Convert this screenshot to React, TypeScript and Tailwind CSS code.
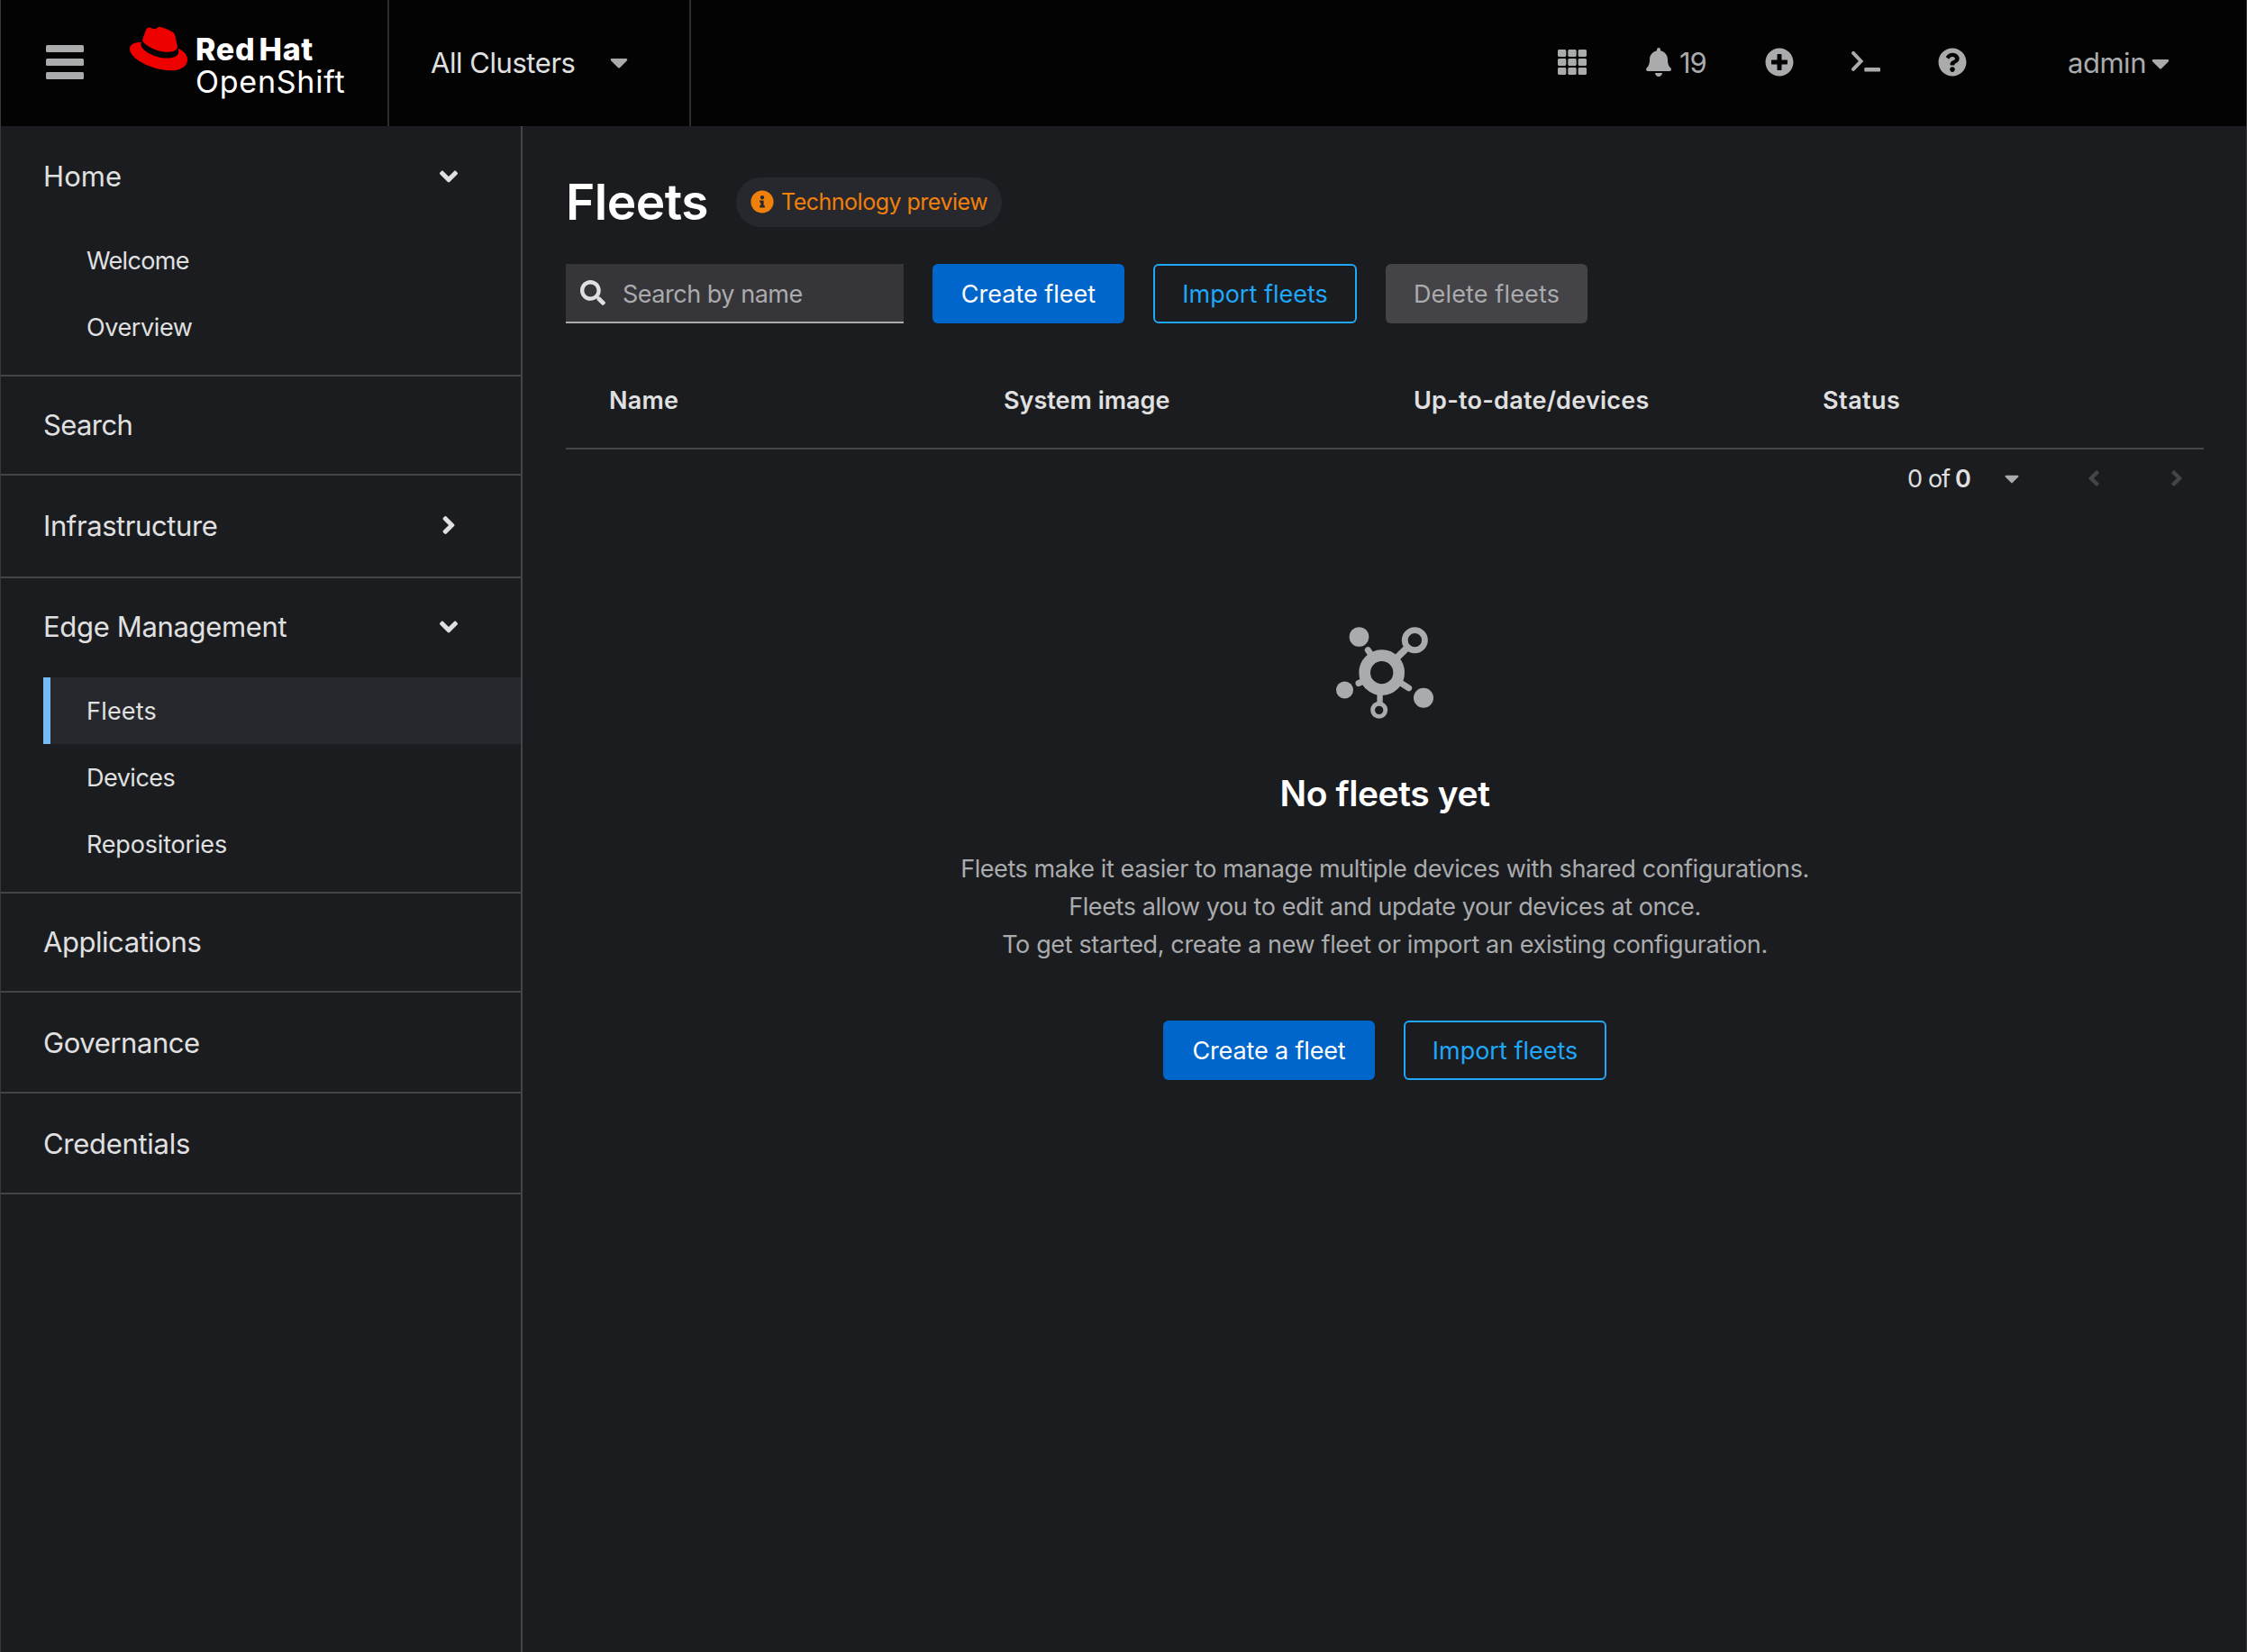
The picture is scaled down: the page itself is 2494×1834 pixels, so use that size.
import type { ReactNode } from 'react';
import {
  FaAngleLeft,
  FaAngleRight,
  FaBell,
  FaCaretDown,
  FaInfoCircle,
  FaPlusCircle,
  FaQuestionCircle,
  FaRedhat,
  FaSearch,
  FaTh,
} from 'react-icons/fa';

function MenuIcon() {
  return (
    <svg viewBox="0 0 42 38" className="-mt-0.5 h-[38px] w-[42px] fill-[#aaabac]">
      <rect x="0" y="0" width="42" height="8" rx="1.5" />
      <rect x="0" y="15" width="42" height="8" rx="1.5" />
      <rect x="0" y="30" width="42" height="8" rx="1.5" />
    </svg>
  );
}

function TerminalIcon() {
  return (
    <svg viewBox="0 0 34 32" className="-mt-0.5 h-8 w-[34px]">
      <path
        d="M3 5.900 L11.600 14.900 L3 23.900"
        fill="none"
        stroke="#aaabac"
        strokeWidth="4"
        strokeLinecap="round"
        strokeLinejoin="miter"
      />
      <rect x="15.3" y="22" width="17.7" height="4.6" rx="1.2" fill="#aaabac" />
    </svg>
  );
}

function ClusterIcon() {
  return (
    <svg viewBox="96 75 330 312" className="h-[104px] w-[110px]" fill="none" stroke="#aaabac">
      <circle cx="251" cy="230" r="57" strokeWidth="38" />
      <circle cx="361" cy="122" r="33.2" strokeWidth="20.5" />
      <circle cx="242" cy="355" r="21.3" strokeWidth="14.5" />
      <g fill="#aaabac" stroke="none">
        <circle cx="175.5" cy="111" r="32.5" />
        <circle cx="127.5" cy="288" r="28.5" />
        <circle cx="390" cy="314" r="33" />
      </g>
      <g strokeWidth="21" strokeLinecap="round">
        <path d="M205 155 L222 180" />
        <path d="M174 265.500 L200 254" />
        <path d="M341 281.500 L304 258" />
      </g>
      <path d="M302 180 L338 145" strokeWidth="23" />
      <path d="M245 296 L244.500 336" strokeWidth="19" />
    </svg>
  );
}

type Item = { label: string; track: string; active?: boolean };

function SubNav({ items }: { items: Item[] }) {
  return (
    <ul className="pb-4 pl-[47px]">
      {items.map((item) => (
        <li
          key={item.label}
          className={
            item.active
              ? 'flex h-[74px] items-center border-l-8 border-[#73bcf7] bg-[#27282d] pt-0.5 pl-10 text-[27px]'
              : 'flex h-[74px] items-center pt-0.5 pl-12 text-[27px]'
          }
        >
          <span className={item.track}>{item.label}</span>
        </li>
      ))}
    </ul>
  );
}

function NavRow({
  label,
  track,
  height,
  chevron,
}: {
  label: string;
  track: string;
  height: string;
  chevron?: 'open' | 'closed';
}) {
  return (
    <div className={`flex items-center justify-between pr-[72px] pl-[47px] text-[31px] ${height}`}>
      <span className={track}>{label}</span>
      {chevron === 'open' && <FaAngleRight className="-mt-px h-8 w-4 rotate-90" />}
      {chevron === 'closed' && <FaAngleRight className="-mt-0.5 h-8 w-4" />}
    </div>
  );
}

function NavGroup({ children }: { children: ReactNode }) {
  return <li className="border-b-2 border-[#444548]">{children}</li>;
}

function Button({
  kind,
  width,
  children,
}: {
  kind: 'primary' | 'secondary' | 'disabled';
  width: string;
  children: ReactNode;
}) {
  const look = {
    primary: 'bg-[#0066cc] text-white',
    secondary: 'border-2 border-[#1fa7f8] text-[#1fa7f8]',
    disabled: 'bg-[#444348] text-[#aaabac]',
  }[kind];
  return (
    <button
      className={`flex h-[66px] items-center justify-center rounded-[6px] pt-0.5 text-[27px] whitespace-nowrap ${width} ${look}`}
    >
      {children}
    </button>
  );
}

function Masthead() {
  return (
    <header className="flex h-[140px] shrink-0 bg-[#030303] text-[31px] text-[#aaabac]">
      <div className="flex w-[431px] items-center border-r-2 border-[#2d2d31] pl-[50px]">
        <MenuIcon />
        <FaRedhat className="mt-[22px] ml-[51px] h-16 w-16 self-start text-[#ee0000]" />
        <div className="mt-1.5 ml-[9px] text-[34px] leading-9 whitespace-nowrap text-white">
          <div className="font-extrabold tracking-[0.7px] [word-spacing:-4px]">Red Hat</div>
          <div className="tracking-[0.76px]">OpenShift</div>
        </div>
      </div>
      <div className="flex w-[335px] items-center border-r-2 border-[#2d2d31] pl-[46px]">
        <span className="w-[199px] tracking-[-0.45px] text-[#e0e0e0]">All Clusters</span>
        <FaCaretDown className="-mt-0.5 h-8 w-5" />
      </div>
      <div className="mr-[85px] ml-auto flex items-center">
        <FaTh className="-mt-0.5 h-8 w-8" />
        <FaBell className="-mt-0.5 ml-[66px] h-8 w-7" />
        <span className="ml-[9px] w-[95px] tracking-[-1.2px]">19</span>
        <FaPlusCircle className="-mt-0.5 h-8 w-8" />
        <span className="ml-[63px]">
          <TerminalIcon />
        </span>
        <FaQuestionCircle className="-mt-0.5 ml-[63px] h-8 w-8" />
        <span className="ml-[112px] w-[93px] tracking-[-0.48px]">admin</span>
        <FaCaretDown className="h-8 w-5" />
      </div>
    </header>
  );
}

function Sidebar() {
  return (
    <nav className="w-[579px] shrink-0 border-r-2 border-[#444548] text-[#e0e0e0]">
      <ul>
        <NavGroup>
          <NavRow label="Home" track="tracking-[0.1px]" height="h-28" chevron="open" />
          <SubNav
            items={[
              { label: 'Welcome', track: 'tracking-[-0.68px]' },
              { label: 'Overview', track: 'tracking-[-0.4px]' },
            ]}
          />
        </NavGroup>
        <NavGroup>
          <NavRow label="Search" track="tracking-[-0.6px]" height="h-[108px]" />
        </NavGroup>
        <NavGroup>
          <NavRow label="Infrastructure" track="tracking-[-0.41px]" height="h-28" chevron="closed" />
        </NavGroup>
        <NavGroup>
          <NavRow label="Edge Management" track="tracking-[-0.33px]" height="mb-0.5 h-[108px]" chevron="open" />
          <SubNav
            items={[
              { label: 'Fleets', track: 'tracking-[0.2px]', active: true },
              { label: 'Devices', track: 'tracking-[-0.5px]' },
              { label: 'Repositories', track: 'tracking-[-0.18px]' },
            ]}
          />
        </NavGroup>
        <NavGroup>
          <NavRow label="Applications" track="tracking-[-0.45px]" height="h-[108px]" />
        </NavGroup>
        <NavGroup>
          <NavRow label="Governance" track="tracking-[-0.42px]" height="h-[110px] pt-0.5" />
        </NavGroup>
        <NavGroup>
          <NavRow label="Credentials" track="tracking-[-0.29px]" height="h-[110px] pt-0.5" />
        </NavGroup>
      </ul>
    </nav>
  );
}

function EmptyState() {
  return (
    <section className="mt-[132px] flex flex-col items-center">
      <ClusterIcon />
      <h2 className="mt-[58px] text-[39px] leading-[48px] font-semibold tracking-[-0.42px] text-white">No fleets yet</h2>
      <div className="mt-[39px] text-center text-[27px] leading-[42px] whitespace-nowrap text-[#aaabac]">
        <p className="tracking-[-0.42px]">
          Fleets make it easier to manage multiple devices with shared configurations.
        </p>
        <p className="tracking-[-0.41px]">Fleets allow you to edit and update your devices at once.</p>
        <p className="tracking-[-0.36px]">To get started, create a new fleet or import an existing configuration.</p>
      </div>
      <div className="mt-[63px] flex gap-8">
        <Button kind="primary" width="w-[235px]">
          <span className="tracking-[-0.15px]">Create a fleet</span>
        </Button>
        <Button kind="secondary" width="w-[225px]">
          Import fleets
        </Button>
      </div>
    </section>
  );
}

export default function App() {
  return (
    <div className="flex h-[1834px] w-[2494px] flex-col overflow-hidden border-x border-[#38393d] bg-[#1b1c20] font-['Inter',sans-serif]">
      <Masthead />
      <div className="flex flex-1">
        <Sidebar />
        <main className="flex-1 pt-14 pr-[47px] pl-12">
          <div className="flex h-14 items-center">
            <h1 className="w-[189px] text-[55px] leading-none font-semibold tracking-[-0.5px] text-white">Fleets</h1>
            <div className="mt-px flex h-[55px] w-[295px] items-center rounded-full bg-[#27282d] pl-4 text-[25px] text-[#f0800c]">
              <FaInfoCircle className="-mt-0.5 h-[26px] w-[26px]" />
              <span className="ml-2 tracking-[-0.5px] whitespace-nowrap">Technology preview</span>
            </div>
          </div>

          <div className="mt-[41px] flex gap-8">
            <div className="flex h-[66px] w-[375px] items-center border-b-2 border-[#aaabac] bg-[#36353a] pl-4">
              <FaSearch className="h-7 w-7 text-[#e0e0e0]" />
              <span className="mt-1 ml-[19px] text-[27px] tracking-[-0.48px] text-[#aaabac]">Search by name</span>
            </div>
            <Button kind="primary" width="w-[213px]">
              Create fleet
            </Button>
            <Button kind="secondary" width="w-[226px]">
              Import fleets
            </Button>
            <Button kind="disabled" width="w-[224px]">
              <span className="tracking-[0.14px]">Delete fleets</span>
            </Button>
          </div>

          <div className="mt-8 grid h-[108px] grid-cols-[438px_455px_454px_1fr] items-center border-b-2 border-[#444548] pt-0.5 pl-12 text-[27px] font-semibold text-[#e0e0e0]">
            <span className="tracking-[0.25px]">Name</span>
            <span>System image</span>
            <span className="tracking-[0.25px]">Up-to-date/devices</span>
            <span className="tracking-[0.46px]">Status</span>
          </div>

          <div className="mr-[23px] flex h-16 items-center justify-end text-[27px] text-[#e0e0e0]">
            <span className="mt-0.5 w-[23px]">0</span>
            <span className="mt-0.5 w-[30px] tracking-[-1.2px]">of</span>
            <span className="mt-0.5 w-[55px] font-semibold">0</span>
            <FaCaretDown className="h-[26px] w-4 text-[#aaabac]" />
            <FaAngleLeft className="ml-[76px] h-7 w-3.5 text-[#444548]" />
            <FaAngleRight className="ml-[78px] h-7 w-3.5 text-[#444548]" />
          </div>

          <EmptyState />
        </main>
      </div>
    </div>
  );
}
